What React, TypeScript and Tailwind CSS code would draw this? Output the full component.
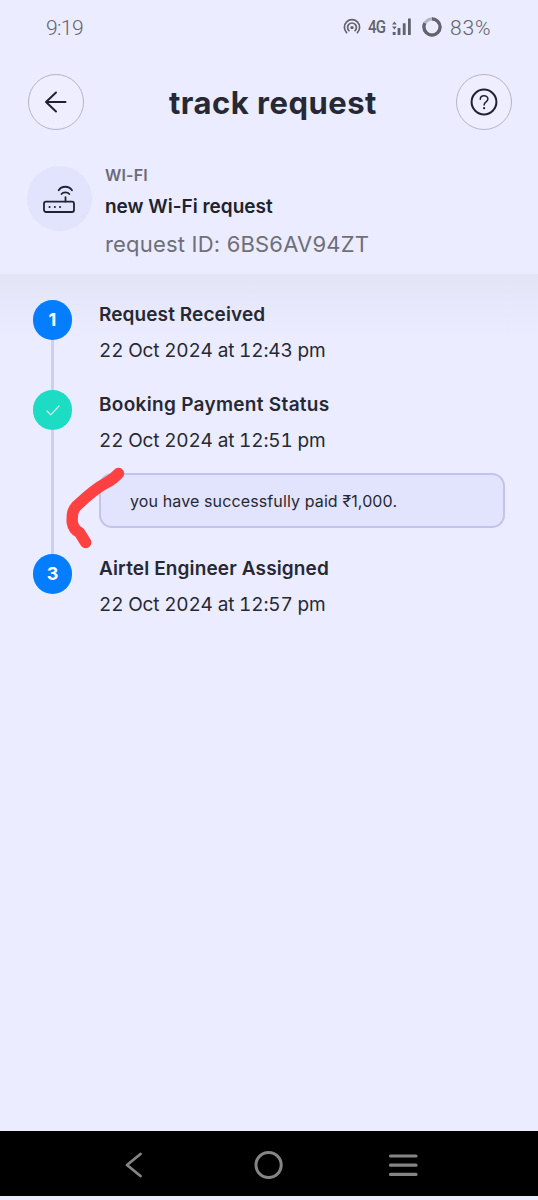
import type { ReactNode } from 'react';

type Step = {
  title: string;
  titleClass: string;
  date: string;
  done?: boolean;
  note?: string;
};

const STEPS: Step[] = [
  { title: 'Request Received', titleClass: 'tracking-[0.1px]', date: '22 Oct 2024 at 12:43 pm' },
  {
    title: 'Booking Payment Status',
    titleClass: 'tracking-[0.3px]',
    date: '22 Oct 2024 at 12:51 pm',
    done: true,
    note: 'you have successfully paid ₹1,000.',
  },
  { title: 'Airtel Engineer Assigned', titleClass: 'tracking-[0.13px]', date: '22 Oct 2024 at 12:57 pm' },
];

function StatusBar() {
  return (
    <div className="flex h-[54px] items-center pr-[46px] pl-[46px] font-['Roboto',sans-serif] text-[#62636f]">
      <span className="mt-px text-[21px] leading-[54px] font-light tracking-[-0.6px]">9:19</span>
      <svg className="ml-auto h-[18px] w-[18px]" viewBox="0 0 18 18" fill="none" stroke="currentColor" strokeWidth="1.7" strokeLinecap="round">
        <path d="M3.6 14.6A7.6 7.6 0 1 1 14.4 14.6" />
        <path d="M6 12.6A4.4 4.4 0 1 1 12 12.6" />
        <circle cx="9" cy="9.6" r="1.7" fill="currentColor" stroke="none" />
      </svg>
      <span className="ml-[7px] w-[18px] origin-left scale-x-[0.86] text-[17.5px] font-medium tracking-[-0.8px]">4G</span>
      <svg className="ml-[6px] h-[18px] w-[19px]" viewBox="0 0 19 18" fill="currentColor">
        <path d="M0 6.6 2.4 3.6 4.8 6.6ZM0 8.6H4.8L2.4 11.4Z" />
        <path d="M.7 14H3.6V17H.7ZM5.6 10H8.4V17H5.6ZM10.8 5.3H13.6V17H10.8ZM16 .5H18.8V17H16Z" />
      </svg>
      <svg className="ml-[11px] h-5 w-5" viewBox="0 0 20 20" fill="none" strokeWidth="3.2">
        <circle cx="10" cy="10" r="8.1" stroke="#b4b5c3" />
        <circle cx="10" cy="10" r="8.1" stroke="currentColor" pathLength="100" strokeDasharray="83 17" transform="rotate(-90 10 10)" />
      </svg>
      <span className="mt-[3px] ml-[8px] w-[42px] text-[21px] font-light tracking-[0.8px] whitespace-nowrap">83%</span>
    </div>
  );
}

function RoundButton({ label, children }: { label: string; children: ReactNode }) {
  return (
    <button aria-label={label} className="flex h-14 w-14 items-center justify-center rounded-full border border-[#b4b4c6] bg-[#eeeeff] text-[#20232f]">
      {children}
    </button>
  );
}

function Header() {
  return (
    <header className="h-[274px] bg-[#ebecff]">
      <StatusBar />
      <div className="mt-5 flex items-center justify-between pr-[26px] pl-7">
        <RoundButton label="Back">
          <svg className="h-6 w-6" viewBox="0 0 24 24" fill="none" stroke="currentColor" strokeWidth="2" strokeLinecap="round" strokeLinejoin="round">
            <path d="M21.5 12H2M12 2.5 2 12 12 21.5" />
          </svg>
        </RoundButton>
        <h1 className="pt-[2px] pl-[6px] text-[31px] leading-[54px] font-bold tracking-[0.5px] whitespace-nowrap text-[#262935]">track request</h1>
        <RoundButton label="Help">
          <svg className="h-7 w-7" viewBox="0 0 28 28" fill="none" stroke="currentColor" strokeLinecap="round">
            <circle cx="14" cy="14" r="12.4" strokeWidth="2" />
            <path d="M10.3 11.2C10.3 6.5 17.9 6.6 17.9 11.1 17.9 14 14.1 13.8 14.1 17" strokeWidth="1.5" />
            <circle cx="14.1" cy="20.2" r="1.1" fill="currentColor" stroke="none" />
          </svg>
        </RoundButton>
      </div>
      <div className="mt-9 flex pl-[27px]">
        <div className="flex h-[65px] w-[65px] items-center justify-center rounded-full bg-[#e2e3fd]">
          <svg className="mr-[2px] h-[28px] w-[32px]" viewBox="0 0 32 28" fill="none" stroke="#20232f" strokeWidth="1.8" strokeLinecap="round">
            <rect x="1" y="16.6" width="30" height="10.4" rx="2" />
            <path d="M22.5 12.2V16.5M15.7 5.2C18.5.6 26 .6 29 5.2M18.5 9C20.2 6.8 24.6 6.8 26.3 9" />
            <path d="M6.5 21.9H6.6M11.8 21.9H11.9M17 21.9H17.1" strokeWidth="2" />
          </svg>
        </div>
        <div className="ml-[13px] whitespace-nowrap">
          <p className="h-[20px] text-[16px] leading-[19px] font-semibold tracking-[0.15px] text-[#6a6b77]">WI-FI</p>
          <h2 className="mt-[10px] h-[22px] text-[19px] leading-[22px] font-semibold text-[#20232f]">new Wi-Fi request</h2>
          <p className="mt-[12px] h-[28px] text-[22px] leading-[28px] tracking-[0.19px] text-[#6e6f7a]">request ID: 6BS6AV94ZT</p>
        </div>
      </div>
    </header>
  );
}

function RedStroke() {
  return (
    <svg className="absolute top-[-9px] left-[-36px] h-[88px] w-[64px]" viewBox="0 0 64 88" fill="none" stroke="#ff4142" strokeWidth="11.4" strokeLinecap="round" strokeLinejoin="round">
      <path d="M53.5 7.500C50 11.500 47 14 41 17 30 22.500 20 32 11.500 40 7.500 44.500 7 48 7.200 56 8 61 11 65 14.500 66.500L20.700 76.500" />
    </svg>
  );
}

function TimelineStep({ step, number, last }: { step: Step; number: number; last: boolean }) {
  return (
    <li className="flex">
      <div className="flex w-[39px] shrink-0 flex-col items-center">
        {step.done ? (
          <span className="flex h-10 w-[39px] items-center justify-center rounded-full bg-[#1ddcc4]">
            <svg className="h-[11px] w-[14px]" viewBox="0 0 14 11" fill="none" stroke="#d8fff9" strokeWidth="1.1" strokeLinecap="round">
              <path d="M1 6 4.7 9.8 13 1" />
            </svg>
          </span>
        ) : (
          <span className="flex h-10 w-[39px] items-center justify-center rounded-full bg-[#057dff] pb-px text-[18px] font-bold text-white">{number}</span>
        )}
        {!last && <span className="w-[3px] grow bg-[#cfceee]" />}
      </div>
      <div className="ml-[27px] w-[406px]">
        <h3 className={`mt-[3px] h-6 text-[19px] leading-6 font-semibold whitespace-nowrap text-[#262935] ${step.titleClass}`}>{step.title}</h3>
        <p className="mt-[11px] h-[25px] text-[19px] leading-[25px] tracking-[-0.18px] whitespace-nowrap tabular-nums text-[#262935]">{step.date}</p>
        {step.note ? (
          <div className="relative mt-5 mb-[26px] h-[55px] rounded-[13px] border-2 border-[#c4c4ea] bg-[#e2e3fd] pl-[29px] text-[16px] leading-[52px] tracking-[0.12px] text-[#262935]">
            {step.note}
            <RedStroke />
          </div>
        ) : (
          <div className="h-[27px]" />
        )}
      </div>
    </li>
  );
}

function NavigationBar() {
  return (
    <nav className="mb-1 flex h-[65px] items-center bg-black pt-[2px] text-[#858585]">
      <svg className="ml-[125px] h-[28px] w-[18px]" viewBox="0 0 18 28" fill="none" stroke="currentColor" strokeWidth="2.8" strokeLinecap="round" strokeLinejoin="round">
        <path d="M15.5 3 2 14 15.5 25" />
      </svg>
      <svg className="ml-[111px] h-[30px] w-[30px]" viewBox="0 0 30 30" fill="none" stroke="currentColor" strokeWidth="3">
        <circle cx="14.6" cy="15" r="12.6" />
      </svg>
      <svg className="ml-[104px] h-6 w-[30px]" viewBox="0 0 30 24" fill="none" stroke="currentColor" strokeWidth="3.2" strokeLinecap="round">
        <path d="M2.5 3H28M2.5 12.2H28M2.5 21.4H28" />
      </svg>
    </nav>
  );
}

export default function App() {
  return (
    <div className="flex h-[1200px] w-[538px] flex-col overflow-hidden bg-[#ebecff] font-['Inter',sans-serif]">
      <Header />
      <main className="grow bg-linear-to-b from-[#e3e4f6] to-[#ebecff] to-[64px]">
        <ol className="mt-[26px] pl-[33px]">
          {STEPS.map((step, i) => (
            <TimelineStep key={step.title} step={step} number={i + 1} last={i === STEPS.length - 1} />
          ))}
        </ol>
      </main>
      <NavigationBar />
    </div>
  );
}
